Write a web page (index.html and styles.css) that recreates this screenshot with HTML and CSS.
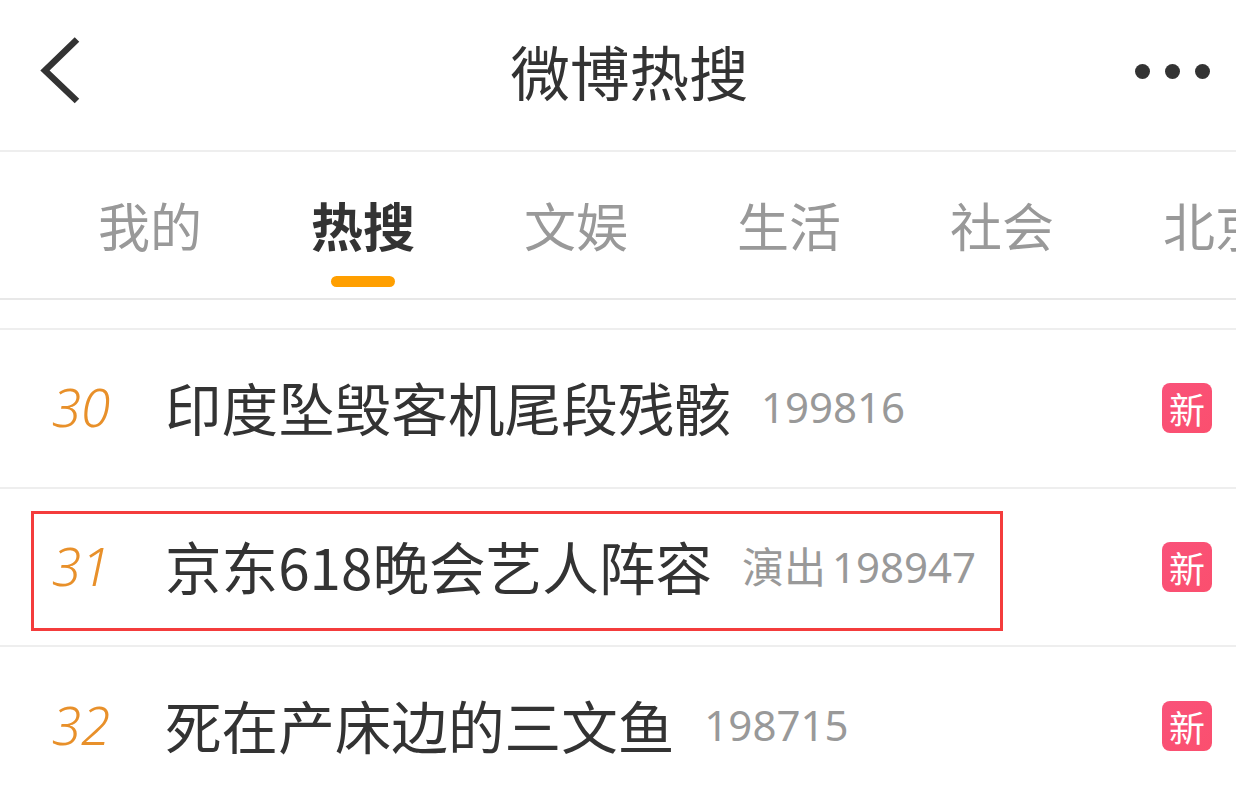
FILE: index.html
```html
<!DOCTYPE html>
<html lang="zh-CN">
<head>
    <meta charset="UTF-8">
    <title>微博热搜</title>
    <link rel="stylesheet" href="styles.css">
</head>
<body>
    <header class="top-bar">
        <svg class="back-icon" width="40" height="68" viewBox="0 0 40 68">
            <path d="M37 2.5 L5 33.5 L37 64" fill="none" stroke="#333" stroke-width="6.5"/>
        </svg>
        <h1 class="page-title">微博热搜</h1>
        <div class="more-icon"><i></i><i></i><i></i></div>
    </header>

    <nav class="tabs">
        <a class="tab">我的</a>
        <a class="tab active">热搜</a>
        <a class="tab">文娱</a>
        <a class="tab">生活</a>
        <a class="tab">社会</a>
        <a class="tab">北京</a>
    </nav>

    <div class="list">
        <div class="row">
            <span class="rank">30</span>
            <span class="topic">印度坠毁客机尾段残骸</span>
            <span class="heat">199816</span>
            <span class="badge">新</span>
        </div>
        <div class="row">
            <span class="rank">31</span>
            <span class="topic">京东618晚会艺人阵容</span>
            <span class="heat"><span class="category">演出</span>198947</span>
            <span class="badge">新</span>
            <div class="highlight"></div>
        </div>
        <div class="row">
            <span class="rank">32</span>
            <span class="topic">死在产床边的三文鱼</span>
            <span class="heat">198715</span>
            <span class="badge">新</span>
        </div>
    </div>
</body>
</html>
```

FILE: styles.css
```css
* {
    box-sizing: border-box;
}

body {
    margin: 0;
    height: 796px;
    overflow: hidden;
    background-color: #fff;
    color: #333;
    font-family: "Noto Sans CJK SC", "Noto Sans", sans-serif;
}

.top-bar {
    display: flex;
    align-items: center;
    justify-content: space-between;
    height: 152px;
    padding: 0 26px 8px 40px;
    border-bottom: 2px solid #eee;
}

.back-icon {
    display: block;
}

.page-title {
    margin: 0 0 0 44px;
    font-size: 59.5px;
    font-weight: 400;
    line-height: 1;
    color: #333;
}

.more-icon {
    display: flex;
    gap: 15px;
}

.more-icon i {
    width: 15px;
    height: 15px;
    border-radius: 50%;
    background-color: #333;
}

.tabs {
    display: flex;
    gap: 109px;
    height: 148px;
    padding-left: 98px;
    overflow: hidden;
    border-bottom: 2px solid #e8e8e8;
    white-space: nowrap;
}

.tab {
    position: relative;
    flex: none;
    padding-top: 37px;
    font-size: 52px;
    line-height: 72px;
    color: #999;
}

.tab.active {
    font-weight: 700;
    color: #333;
}

.tab.active::after {
    content: "";
    position: absolute;
    left: 20px;
    top: 124px;
    width: 64px;
    height: 11px;
    border-radius: 6px;
    background-color: #ff9f00;
}

.list {
    margin-top: 28px;
    border-top: 2px solid #eee;
}

.row {
    position: relative;
    display: flex;
    align-items: center;
    height: 158.5px;
    padding: 0 24px 0 30px;
    border-bottom: 2px solid #eee;
}

.row:last-child {
    border-bottom: none;
}

.rank {
    flex: none;
    width: 100px;
    margin-right: 35px;
    margin-bottom: 3px;
    padding-left: 2px;
    font-family: "Noto Sans", sans-serif;
    font-size: 53px;
    font-style: italic;
    font-weight: 300;
    text-align: center;
    color: #e8902a;
}

.topic {
    margin-bottom: 4px;
    font-size: 56.6px;
    line-height: 72px;
    color: #333;
}

.heat {
    margin-left: 30px;
    margin-bottom: 4px;
    font-family: "Noto Sans", "Noto Sans CJK SC", sans-serif;
    font-size: 42px;
    color: #999;
}

.category {
    margin-right: 6px;
}

.badge {
    width: 50px;
    height: 50px;
    margin-left: auto;
    border-radius: 8px;
    background: linear-gradient(135deg, #f9527a, #fb4f6e);
    font-size: 36px;
    line-height: 50px;
    text-align: center;
    color: #fff;
}

/* red box drawn over row 31 */
.highlight {
    position: absolute;
    left: 31px;
    top: 22px;
    width: 972px;
    height: 120px;
    border: 3px solid #f43c3c;
}
```
